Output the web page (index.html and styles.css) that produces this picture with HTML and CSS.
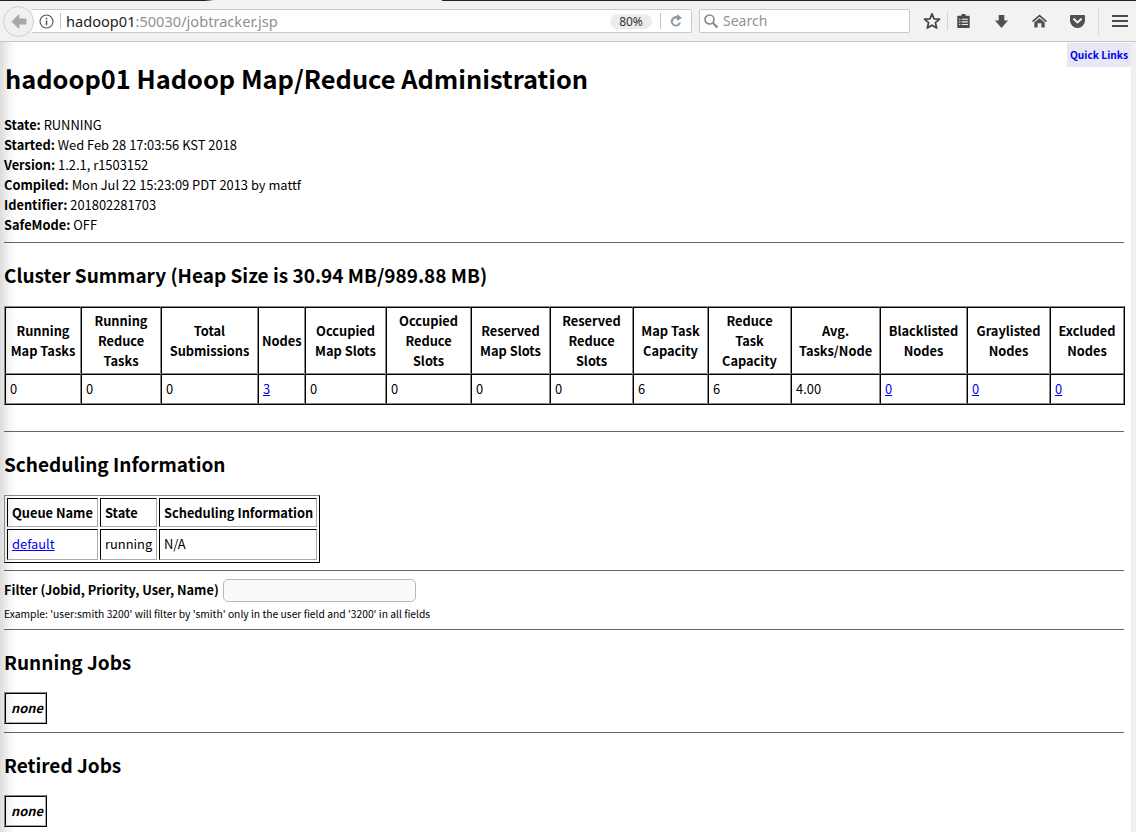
FILE: index.html
```html
<!DOCTYPE html>
<html>
<head>
<meta charset="utf-8">
<title>hadoop01 Hadoop Map/Reduce Administration</title>
<link rel="stylesheet" href="styles.css">
</head>
<body>
<div class="topline"></div>
<header class="toolbar">
  <button class="back" aria-label="Back">
    <svg width="16" height="15" viewBox="0 0 16 15"><path d="M7.5 0.5 L0.5 7.5 L7.5 14.5 L8.5 13.5 L8.5 10.5 L15.5 10.5 L15.5 4.5 L8.5 4.5 L8.5 1.5 Z" fill="#a9a9a9"/></svg>
  </button>
  <div class="urlbar">
    <svg class="info" width="15" height="15" viewBox="0 0 16 16"><circle cx="8" cy="8" r="6.9" fill="none" stroke="#555" stroke-width="1.2"/><rect x="7.2" y="7" width="1.6" height="5" fill="#555"/><rect x="7.2" y="4" width="1.6" height="1.7" fill="#555"/></svg>
    <span class="urlsep"></span>
    <span class="url"><span class="host">hadoop01</span>:50030/jobtracker.jsp</span>
    <span class="zoom">80%</span>
    <span class="urlsep2"></span>
    <svg class="reload" width="16" height="16" viewBox="0 0 16 16"><path d="M13 9.5 A5.2 5.2 0 1 1 9 3.2 L9 1 L14 5 L9 8 L9 5.8 A3 3 0 1 0 10.8 9.5 Z" fill="#8e9aa3"/></svg>
  </div>
  <div class="search">
    <svg width="16" height="16" viewBox="0 0 16 16"><circle cx="6.5" cy="6.5" r="4.5" fill="none" stroke="#8a8a8a" stroke-width="1.7"/><path d="M10 10 L14.5 14.5" stroke="#8a8a8a" stroke-width="2.2"/></svg>
    <span>Search</span>
  </div>
  <svg class="star" width="18" height="18" viewBox="0 0 18 18"><path d="M9 1.8 L11.1 6.8 L16.6 7.2 L12.4 10.7 L13.7 16 L9 13.2 L4.3 16 L5.6 10.7 L1.4 7.2 L6.9 6.8 Z" fill="none" stroke="#444" stroke-width="1.7" stroke-linejoin="round"/></svg>
  <span class="tsep"></span>
  <svg class="clip" width="15" height="16" viewBox="0 0 16 18"><path d="M5.5 3 L6 1 L10 1 L10.5 3 L14 3 Q15 3 15 4 L15 16 Q15 17 14 17 L2 17 Q1 17 1 16 L1 4 Q1 3 2 3 Z" fill="#4a4a4a"/><path d="M6 7 H13 M6 10 H13 M6 13 H13 M3 7 H4.5 M3 10 H4.5 M3 13 H4.5" stroke="#f3f2f1" stroke-width="1.2"/></svg>
  <svg class="down" width="15" height="15" viewBox="0 0 16 16"><path d="M5 1 H11 V7 H15 L8 15 L1 7 H5 Z" fill="#505050"/></svg>
  <svg class="home" width="17" height="16" viewBox="0 0 18 16"><path d="M9 1 L17 8 L15.6 9.2 L9 3.6 L2.4 9.2 L1 8 Z" fill="#505050"/><path d="M9 5 L14.5 9.6 V15 H11 V10.5 H7 V15 H3.5 V9.6 Z" fill="#505050"/></svg>
  <svg class="pocket" width="17" height="15" viewBox="0 0 17 16"><path d="M1.5 1 H15.5 Q16.5 1 16.5 2 V7 A8 8 0 0 1 0.5 7 V2 Q0.5 1 1.5 1 Z" fill="#505050"/><path d="M4.8 5.5 L8.5 9 L12.2 5.5" fill="none" stroke="#f3f2f1" stroke-width="2.2" stroke-linecap="round"/></svg>
  <span class="tsep2"></span>
  <svg class="menu" width="16" height="14" viewBox="0 0 16 14"><path d="M0 2 H16 M0 7 H16 M0 12 H16" stroke="#4a4a4a" stroke-width="2.2"/></svg>
</header>
<main class="page">
  <a class="quick" href="#">Quick Links</a>
  <div class="scroll"></div>
  <h1>hadoop01 Hadoop Map/Reduce Administration</h1>
  <div class="info-block">
    <b>State:</b> RUNNING<br>
    <b>Started:</b> Wed Feb 28 17:03:56 KST 2018<br>
    <b>Version:</b> 1.2.1, r1503152<br>
    <b>Compiled:</b> Mon Jul 22 15:23:09 PDT 2013 by mattf<br>
    <b>Identifier:</b> 201802281703<br>
    <b>SafeMode:</b> OFF
  </div>
  <hr class="hr-info">
  <h2 class="h-cluster">Cluster Summary (Heap Size is 30.94 MB/989.88 MB)</h2>
  <table class="summary">
    <tr>
      <th>Running<br>Map Tasks</th><th>Running<br>Reduce<br>Tasks</th><th>Total<br>Submissions</th><th>Nodes</th><th>Occupied<br>Map Slots</th><th>Occupied<br>Reduce<br>Slots</th><th>Reserved<br>Map Slots</th><th>Reserved<br>Reduce<br>Slots</th><th>Map Task<br>Capacity</th><th>Reduce<br>Task<br>Capacity</th><th>Avg.<br>Tasks/Node</th><th>Blacklisted<br>Nodes</th><th>Graylisted<br>Nodes</th><th>Excluded<br>Nodes</th>
    </tr>
    <tr>
      <td>0</td><td>0</td><td>0</td><td><a href="#">3</a></td><td>0</td><td>0</td><td>0</td><td>0</td><td>6</td><td>6</td><td>4.00</td><td><a href="#">0</a></td><td><a href="#">0</a></td><td><a href="#">0</a></td>
    </tr>
  </table>
  <hr class="hr-summary">
  <h2 class="h-sched">Scheduling Information</h2>
  <table class="sched">
    <tr><th>Queue Name</th><th>State</th><th>Scheduling Information</th></tr>
    <tr><td><a href="#">default</a></td><td>running</td><td>N/A</td></tr>
  </table>
  <hr class="hr-sched">
  <form class="filter">
    <label for="filter-input"><b>Filter (Jobid, Priority, User, Name)</b></label>
    <input id="filter-input" type="text">
  </form>
  <p class="example">Example: 'user:smith 3200' will filter by 'smith' only in the user field and '3200' in all fields</p>
  <hr class="hr-filter">
  <h2 class="h-jobs">Running Jobs</h2>
  <table class="none"><tr><td><b><i>none</i></b></td></tr></table>
  <hr class="hr-jobs">
  <h2 class="h-jobs">Retired Jobs</h2>
  <table class="none"><tr><td><b><i>none</i></b></td></tr></table>
</main>
</body>
</html>
```
FILE: styles.css
```css
* { box-sizing: border-box; }
html, body { margin: 0; padding: 0; height: 832px; overflow: hidden; background: #fff; }
body { font-family: "Noto Sans CJK KR", "Noto Sans CJK SC", sans-serif; font-size: 12.9px; line-height: 20px; color: #000; }
b, th { font-size: 12.8px; }
.topline { height: 1px; background: linear-gradient(to right, #222 0, #222 205px, #f3f2f1 214px, #f3f2f1 441px, #222 443px); }
.toolbar { height: 41px; background: #f3f2f1; border-bottom: 1px solid #c4c4c4; display: flex; align-items: center; font-family: "Noto Sans", sans-serif; }
.back { width: 31px; height: 31px; margin-left: 3px; padding: 0; border-radius: 50%; border: 1px solid #d0d0d0; background: #f0f0f0; display: flex; align-items: center; justify-content: center; flex: none; position: relative; z-index: 1; }
.urlbar { width: 660px; height: 24px; margin-left: -2px; background: #fff; border: 1px solid #c8c8c8; border-left: none; border-radius: 0 2px 2px 0; display: flex; align-items: center; padding-left: 7px; flex: none; }
.urlsep { width: 1px; height: 16px; background: #c4c4c4; margin-left: 6px; }
.url { margin-left: 5px; font-size: 14.6px; color: #8f8f8f; flex: 1; }
.host { color: #222; }
.zoom { width: 42px; height: 15px; border-radius: 8px; background: #ececec; color: #333; font-size: 12px; line-height: 15px; text-align: center; }
.urlsep2 { width: 1px; height: 16px; background: #c4c4c4; margin-left: 8px; }
.reload { margin: 0 7px; }
.search { width: 211px; height: 24px; margin-left: 7px; background: #fff; border: 1px solid #c8c8c8; border-radius: 2px; display: flex; align-items: center; padding-left: 3px; gap: 4px; color: #929292; font-size: 14px; flex: none; }
.star { margin-left: 13px; flex: none; }
.tsep { width: 1px; height: 18px; background: #d4d4d4; margin-left: 6px; flex: none; }
.clip { margin-left: 8px; flex: none; }
.down { margin-left: 23px; flex: none; }
.home { margin-left: 22px; flex: none; }
.pocket { margin-left: 21px; flex: none; }
.tsep2 { width: 1px; height: 30px; background: #dcdcdc; margin-left: 12px; flex: none; }
.menu { margin-left: 13px; flex: none; }
.page { height: 790px; padding: 0 12px 0 4px; position: relative; background: linear-gradient(to right, #dcdcdc, #f4f4f4 9px, #fff 16px) no-repeat; background-size: 16px 100%; }
.quick { position: absolute; right: 5px; top: 1px; width: 64px; height: 24px; background: #e8e8f4; color: #0000ee; font-size: 10.24px; font-weight: 700; line-height: 23px; text-decoration: none; text-align: center; }
.scroll { position: absolute; right: 0; top: 0; width: 5px; height: 100%; background: #f0f0f0; }
h1 { font-size: 25.4px; line-height: 38px; margin: 0; padding: 17px 0 0 1px; font-weight: 700; height: 73px; }
h2 { font-size: 19px; line-height: 28px; margin: 0; font-weight: 700; }
.info-block { margin: 0; height: 120px; }
hr { border: none; border-top: 1px solid #666; margin: 0; height: 1px; }
.hr-info { margin-top: 7px; }
.h-cluster { margin-top: 18px; }
table { border-collapse: separate; }
.summary { margin: 17px 0 0; width: 1121px; table-layout: fixed; border-spacing: 0; border: 1px solid; border-color: #888 #000 #000 #888; }
.summary th, .summary td { border: 1px solid; border-color: #000 #888 #888 #000; padding: 0 3px; }
.summary th { height: 67px; text-align: center; }
.summary td { height: 30px; text-align: left; padding-left: 4px; }
.summary th:nth-child(1) { width: 76px; }
.summary th:nth-child(2) { width: 80px; }
.summary th:nth-child(3) { width: 97px; }
.summary th:nth-child(4) { width: 47px; }
.summary th:nth-child(5) { width: 81px; }
.summary th:nth-child(6) { width: 85px; }
.summary th:nth-child(7) { width: 79px; }
.summary th:nth-child(8) { width: 83px; }
.summary th:nth-child(9) { width: 75px; }
.summary th:nth-child(10) { width: 83px; }
.summary th:nth-child(11) { width: 89px; }
.summary th:nth-child(12) { width: 87px; }
.summary th:nth-child(13) { width: 83px; }
.hr-summary { margin-top: 26px; }
.h-sched { margin-top: 18px; }
.sched { margin-top: 17px; width: 316px; table-layout: fixed; border-spacing: 2px; border: 1px solid; border-color: #888 #000 #000 #888; }
.sched th, .sched td { border: 1px solid; border-color: #000 #aaa #aaa #000; padding: 0 4px; white-space: nowrap; }
.sched th { height: 29px; text-align: left; }
.sched td { height: 31px; text-align: left; padding-bottom: 2px; }
.sched th:nth-child(1) { width: 91px; }
.sched th:nth-child(2) { width: 57px; }
.hr-sched { margin-top: 7px; }
.filter { display: flex; align-items: center; gap: 4px; margin-top: 7px; height: 24px; }
.filter input { width: 193px; height: 23px; border: 1px solid #b8b8b8; border-radius: 5px; background: #fafafa; margin: 0; padding: 0; }
.example { font-size: 10.3px; line-height: 16px; margin: 4px 0 0; }
.hr-filter { margin-top: 7px; }
.h-jobs { margin-top: 18px; }
.none { margin-top: 16px; border-spacing: 0; border: 1px solid; border-color: #888 #000 #000 #888; }
.none td { border: 1px solid; border-color: #000 #aaa #aaa #000; height: 30px; padding: 0 2px 0 5px; }
.hr-jobs { margin-top: 8px; }
a { color: #0000ee; }
```
